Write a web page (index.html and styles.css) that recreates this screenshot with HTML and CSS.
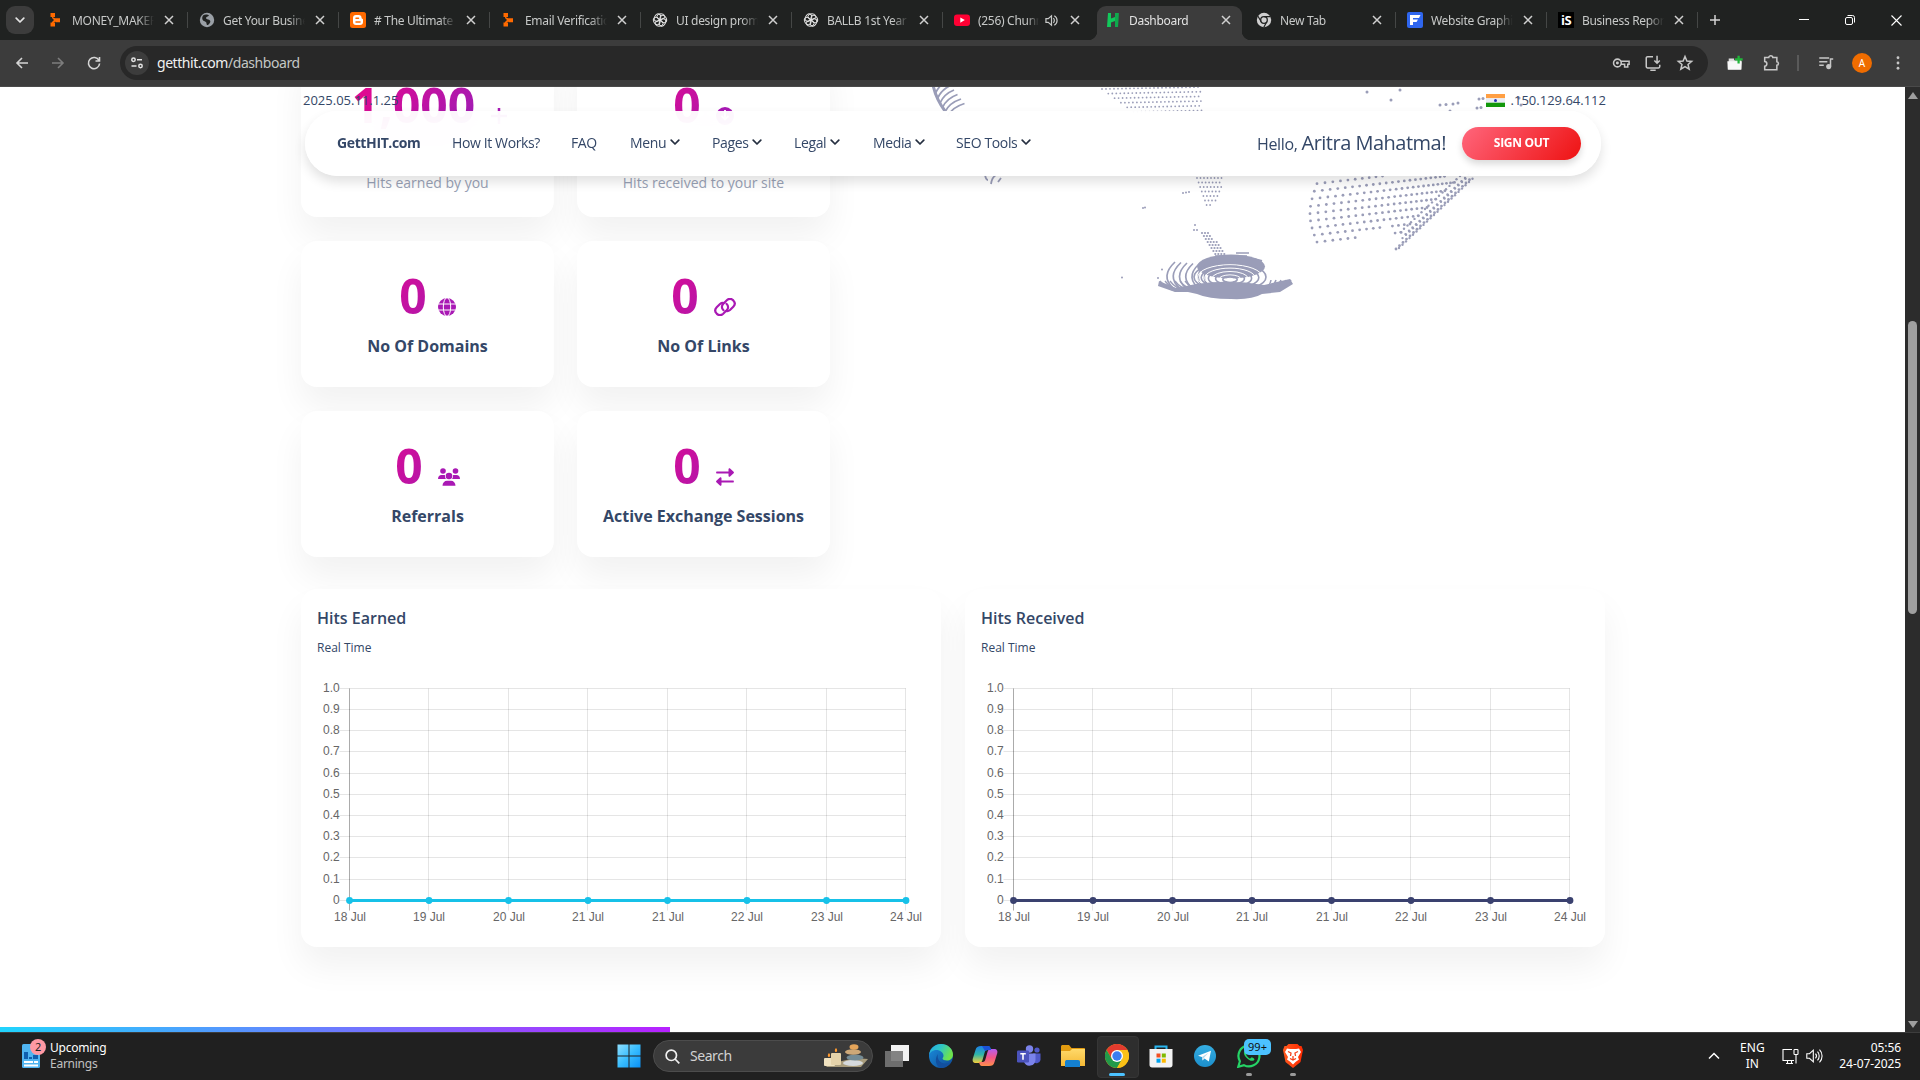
FILE: index.html
```html
<!DOCTYPE html>
<html lang="en">
<head>
<meta charset="utf-8">
<title>Dashboard</title>
<link rel="stylesheet" href="styles.css">
</head>
<body>
<svg class="defs" width="0" height="0">
  <defs>
    <linearGradient id="g-win" x1="0" y1="0" x2="1" y2="1"><stop offset="0" stop-color="#8fe0ff"/><stop offset=".5" stop-color="#38bdff"/><stop offset="1" stop-color="#0a90f5"/></linearGradient>
    <linearGradient id="g-edge" x1="0" y1="0" x2="1" y2=".4"><stop offset="0" stop-color="#23a6e8"/><stop offset=".5" stop-color="#2fc6c4"/><stop offset="1" stop-color="#6fe34b"/></linearGradient>
    <linearGradient id="g-edge2" x1="0" y1="0" x2="1" y2="1"><stop offset="0" stop-color="#1b8fe0"/><stop offset="1" stop-color="#0d4a94"/></linearGradient>
    <linearGradient id="g-cop1" x1="0" y1="0" x2="0" y2="1"><stop offset="0" stop-color="#1c7fe8"/><stop offset=".5" stop-color="#2fb6a8"/><stop offset="1" stop-color="#f5cf3a"/></linearGradient>
    <linearGradient id="g-cop2" x1="0" y1="0" x2="0" y2="1"><stop offset="0" stop-color="#b55cf0"/><stop offset=".5" stop-color="#f2558a"/><stop offset="1" stop-color="#ff8f4a"/></linearGradient>
    <linearGradient id="g-fold" x1="0" y1="0" x2="0" y2="1"><stop offset="0" stop-color="#ffd96a"/><stop offset="1" stop-color="#f5b935"/></linearGradient>
    <linearGradient id="g-tel" x1="0" y1="0" x2="0" y2="1"><stop offset="0" stop-color="#35ade1"/><stop offset="1" stop-color="#1c8fcc"/></linearGradient>
    <linearGradient id="g-brave" x1="0" y1="0" x2="1" y2="0"><stop offset="0" stop-color="#ff5a1f"/><stop offset="1" stop-color="#ff2a00"/></linearGradient>
    <symbol id="i-close" viewBox="0 0 10 10"><path d="M1 1l8 8M9 1L1 9" stroke="currentColor" stroke-width="1.5" fill="none"/></symbol>
    <symbol id="i-down" viewBox="0 0 10 7"><path d="M1.200 1.200L5 5l3.800-3.800" stroke="currentColor" stroke-width="1.700" fill="none" stroke-linecap="round" stroke-linejoin="round"/></symbol>
    <symbol id="i-puzzle" viewBox="0 0 16 16"><path fill="#ff6a00" d="M2.500 1h4.500v4h-4.500zM2.500 10.500h4.500v4h-4.500zM7.500 6.200h4.500v4h-4.500zM4 4.800l4 2v2.500l-4 2v-1.300l2-2-2-2z"/></symbol>
    <symbol id="i-gpt" viewBox="0 0 16 16"><g fill="none" stroke="#e3e3e3" stroke-width="1"><ellipse cx="8.800" cy="4.600" rx="3.900" ry="2.900" transform="rotate(0 8 8)"/><ellipse cx="8.800" cy="4.600" rx="3.900" ry="2.900" transform="rotate(60 8 8)"/><ellipse cx="8.800" cy="4.600" rx="3.900" ry="2.900" transform="rotate(120 8 8)"/><ellipse cx="8.800" cy="4.600" rx="3.900" ry="2.900" transform="rotate(180 8 8)"/><ellipse cx="8.800" cy="4.600" rx="3.900" ry="2.900" transform="rotate(240 8 8)"/><ellipse cx="8.800" cy="4.600" rx="3.900" ry="2.900" transform="rotate(300 8 8)"/></g></symbol>
  </defs>
</svg>

<header class="tabs">
  <button class="tab-search"><svg width="10" height="7"><use href="#i-down"/></svg></button>
  <div class="tab"><svg class="fav" viewBox="0 0 16 16"><use href="#i-puzzle"/></svg><span class="tt">MONEY_MAKER</span><svg class="x"><use href="#i-close"/></svg></div>
  <div class="tab"><svg class="fav" viewBox="0 0 16 16"><circle cx="8" cy="8" r="7.200" fill="#9aa0a6"/><path d="M4 3.500c2-1.500 5-1 6 0-1 1.500-3 1-3 2.500s2 1 3.500 2 1 3-1 4.500c-1 1-2 .5-2-1s-1-2-2.500-2.500S2.500 6 4 3.500z" fill="#202221"/></svg><span class="tt">Get Your Business</span><svg class="x"><use href="#i-close"/></svg></div>
  <div class="tab"><svg class="fav" viewBox="0 0 16 16"><rect width="16" height="16" rx="2.500" fill="#ff6a00"/><path d="M6 3h2.600a3 3 0 0 1 3 3c0 1 1.400.5 1.400 1.600V10a3 3 0 0 1-3 3H6a3 3 0 0 1-3-3V6a3 3 0 0 1 3-3z" fill="#fff"/><path d="M6 6.200h2.500M6 9.900h4" stroke="#ff6a00" stroke-width="1.500" stroke-linecap="round"/></svg><span class="tt"># The Ultimate</span><svg class="x"><use href="#i-close"/></svg></div>
  <div class="tab"><svg class="fav" viewBox="0 0 16 16"><use href="#i-puzzle"/></svg><span class="tt">Email Verification</span><svg class="x"><use href="#i-close"/></svg></div>
  <div class="tab"><svg class="fav"><use href="#i-gpt"/></svg><span class="tt">UI design prompt</span><svg class="x"><use href="#i-close"/></svg></div>
  <div class="tab"><svg class="fav"><use href="#i-gpt"/></svg><span class="tt">BALLB 1st Year</span><svg class="x"><use href="#i-close"/></svg></div>
  <div class="tab nosep"><svg class="fav" viewBox="0 0 16 16"><rect y="2.500" width="16" height="11.500" rx="3" fill="#ff0033"/><path d="M6.300 5.500v5.200L10.800 8.100z" fill="#fff"/></svg><span class="tt short">(256) Chunni</span><svg class="spk" viewBox="0 0 14 14"><path d="M1 5h2.500L7 2v10L3.500 9H1z" fill="none" stroke="currentColor" stroke-width="1.300"/><path d="M9 4.500a3.500 3.500 0 0 1 0 5M10 1.800a6 6 0 0 1 0 10.400" fill="none" stroke="currentColor" stroke-width="1.300"/></svg><svg class="x"><use href="#i-close"/></svg></div>
  <div class="tab active nosep"><svg class="fav" viewBox="0 0 16 16"><path d="M3 1h3v5.500l4-1.500V1h3.500l-.5 14h-3V9l-4 1.500V15H2z" fill="#12c95b"/><path d="M10 1h3.500l-.5 14h-3z" fill="#0fa94d"/></svg><span class="tt">Dashboard</span><svg class="x"><use href="#i-close"/></svg></div>
  <div class="tab"><svg class="fav" viewBox="0 0 16 16"><circle cx="8" cy="8" r="7.200" fill="#d0d0d0"/><circle cx="8" cy="8" r="3.300" fill="none" stroke="#202221" stroke-width="1.300"/><path d="M8 4.700h6.500M5.200 9.700L2 4.200M10.800 9.700l-3 5.500" stroke="#202221" stroke-width="1.200"/></svg><span class="tt">New Tab</span><svg class="x"><use href="#i-close"/></svg></div>
  <div class="tab"><svg class="fav" viewBox="0 0 16 16"><rect width="16" height="16" rx="2" fill="#2f66ee"/><path d="M3 3h10.500l-1.500 3H6v1.500h5L9.500 10H6v3H3z" fill="#fff"/></svg><span class="tt">Website Graphic</span><svg class="x"><use href="#i-close"/></svg></div>
  <div class="tab"><span class="fav is">iS</span><span class="tt">Business Report</span><svg class="x"><use href="#i-close"/></svg></div>
  <svg class="plus" viewBox="0 0 12 12"><path d="M6 1v10M1 6h10" stroke="#d4d4d4" stroke-width="1.500"/></svg>
  <div class="winbtns">
    <svg width="10" height="10" viewBox="0 0 10 10"><path d="M0 4.500h10" stroke="#fff"/></svg>
    <svg width="10" height="10" viewBox="0 0 10 10" fill="none" stroke="#fff"><rect x=".5" y="2.500" width="7" height="7" rx="1.500"/><path d="M2.500.5H7.500a2 2 0 0 1 2 2V7.500"/></svg>
    <svg width="11" height="11" viewBox="0 0 11 11"><path d="M.5.500l10 10M10.500.5l-10 10" stroke="#fff" stroke-width="1.100"/></svg>
  </div>
</header>

<div class="toolbar">
  <svg class="tb" viewBox="0 0 16 16"><path d="M14 8H3M8 3L3 8l5 5" /></svg>
  <svg class="tb dim" viewBox="0 0 16 16"><path d="M2 8h11M8 3l5 5-5 5"/></svg>
  <svg class="tb" viewBox="0 0 16 16"><path d="M13 5.500A5.600 5.600 0 1 0 13.600 8.500M13.500 2v4h-4"/></svg>
  <div class="omni">
    <span class="site"><svg width="14" height="14" viewBox="0 0 14 14" fill="none" stroke="#e3e3e3" stroke-width="1.500"><circle cx="3.500" cy="3.800" r="1.700"/><path d="M7 3.800h5M1.500 10h5"/><circle cx="10.500" cy="10" r="1.700"/></svg></span>
    <span class="url"><b>getthit.com</b>/dashboard</span>
    <svg class="ob" viewBox="0 0 20 20"><circle cx="6" cy="10" r="4.300"/><circle cx="6" cy="10" r=".8" /><path d="M10 8h9v3.500h-1.500v3h-3.500v-3h-4"/></svg>
    <svg class="ob" viewBox="0 0 20 20"><path d="M10 3H4a1.500 1.500 0 0 0-1.500 1.500v9.500A1.500 1.500 0 0 0 4 15.500h12a1.500 1.500 0 0 0 1.500-1.500v-2M14.500 2v8M11.500 7.200l3 3 3-3M7 18h6"/></svg>
    <svg class="ob" viewBox="0 0 20 20"><path d="M10 2.800l2.100 4.900 5.300.5-4 3.500 1.200 5.200L10 14.100l-4.600 2.800 1.200-5.200-4-3.500 5.300-.5z"/></svg>
  </div>
  <svg class="ext1" viewBox="0 0 20 20"><path d="M3 5h6v2h8v10H3z" fill="#dedede"/><path d="M1.500 8h16l-.5 9.500H2z" fill="#f8f8f8"/><path d="M14 2v8.500M10 6h8.500" stroke="#21b53a" stroke-width="2.500"/></svg>
  <svg class="ob ext2" viewBox="0 0 20 20"><path d="M3 4H7.500c0-2.700 4.500-2.700 4.500 0h4.500v4.500c2.300 0 2.300 4 0 4V17.500H3V13.500c3.200 0 3.200-5.200 0-5.200z"/></svg>
  <i class="vbar"></i>
  <svg class="ob" viewBox="0 0 20 20"><path d="M2.500 4.500h11M2.500 8.500h9M2.500 12.500h5M15 14V5.500h3"/><circle cx="13" cy="14" r="2" fill="#c7c7c7"/></svg>
  <span class="avatar">A</span>
  <svg class="dots" viewBox="0 0 4 16"><circle cx="2" cy="2" r="1.600"/><circle cx="2" cy="8" r="1.600"/><circle cx="2" cy="14" r="1.600"/></svg>
</div>

<main class="view">
  <div class="page">
    <svg class="globe" id="globe" width="1920" height="240"></svg>
    <div class="content">
      <div class="stats">
        <section class="card tall">
          <div class="num first">1,000<svg class="ic g15" width="18" height="18" viewBox="0 0 18 18"><path d="M9 1v16M1 9h16" stroke="#a919b4" stroke-width="2.500"/></svg></div>
          <p>Hits earned by you</p>
        </section>
        <section class="card tall">
          <div class="num">0<svg class="ic g15" width="18" height="18" viewBox="0 0 18 18"><circle cx="9" cy="9" r="9" fill="#a919b4"/><path d="M9 3v9M5.500 9L9 12.500 12.500 9" stroke="#fff" stroke-width="1.800" fill="none"/></svg></div>
          <p>Hits received to your site</p>
        </section>
        <section class="card">
          <div class="num">0<svg class="ic g11" width="18" height="18" viewBox="0 0 18 18"><circle cx="9" cy="9" r="9" fill="#a919b4"/><g fill="none" stroke="#fff" stroke-width="1"><ellipse cx="9" cy="9" rx="3.700" ry="9.300"/><path d="M0 6h18M0 12h18"/></g></svg></div>
          <h5>No Of Domains</h5>
        </section>
        <section class="card">
          <div class="num">0<svg class="ic g15" width="22" height="18" viewBox="0 0 22 18"><g fill="none" stroke="#a919b4" stroke-width="2.200" stroke-linecap="round"><path d="M9.500 12.200c-2.200-2-2-4.700-.2-6.500l3.500-3.400c2-1.800 4.700-1.700 6.500.1 1.800 1.900 1.800 4.500 0 6.300l-3.300 3.300c-1.200 1-2.600 1.300-3.700 1"/><path d="M12.500 5.800c2.200 2 2 4.700.2 6.500l-3.500 3.400c-2 1.800-4.700 1.700-6.500-.1-1.800-1.900-1.800-4.500 0-6.300L6 6c1.200-1 2.600-1.300 3.700-1"/></g></svg></div>
          <h5>No Of Links</h5>
        </section>
        <section class="card">
          <div class="num">0<svg class="ic g15" width="22" height="18" viewBox="0 0 22 18" fill="#a919b4"><circle cx="5" cy="3" r="2.800"/><circle cx="17.500" cy="3" r="2.800"/><circle cx="11" cy="8" r="3.300"/><path d="M4.500 17.800c0-3 2-5 4.500-5h4c2.500 0 4.500 2 4.500 5zM0 11c0-2.500 1.500-4 3.500-4h2.500c.4 0 .8.100 1 .2-.2 1.500.2 2.800 1 3.800zM22 11c0-2.500-1.500-4-3.500-4H16c-.4 0-.8.100-1 .2.200 1.500-.2 2.800-1 3.800z"/></svg></div>
          <h5>Referrals</h5>
        </section>
        <section class="card">
          <div class="num">0<svg class="ic g15" width="18" height="18" viewBox="0 0 18 18" fill="#a919b4"><path d="M1 3.500h11.500V1.200c0-1 1-1.300 1.600-.7l3.500 3.200c.5.500.5 1 0 1.500l-3.500 3.200c-.6.600-1.600.2-1.600-.7V5.500H1c-1.200 0-1.200-2 0-2zM17 12.500H5.500v-2.300c0-1-1-1.300-1.600-.7L.4 12.700c-.5.500-.5 1 0 1.500l3.500 3.200c.6.600 1.600.2 1.600-.7v-2.200H17c1.200 0 1.200-2 0-2z"/></svg></div>
          <h5>Active Exchange Sessions</h5>
        </section>
      </div>
      <div class="charts">
        <section class="card chart"><h6>Hits Earned</h6><small>Real Time</small><svg class="plot" data-color="#17c1e8" width="640" height="260"></svg></section>
        <section class="card chart"><h6>Hits Received</h6><small>Real Time</small><svg class="plot" data-color="#3a416f" width="640" height="260"></svg></section>
      </div>
    </div>
    <div class="topline"><span>2025.05.11.1.25</span><span class="ip"><svg width="19" height="13" viewBox="0 0 19 13"><rect width="19" height="4.300" fill="#ff9f43"/><rect y="4.300" width="19" height="4.400" fill="#e9edf5"/><rect y="8.700" width="19" height="4.300" fill="#13980c"/><circle cx="9.500" cy="6.500" r="1.500" fill="#2a35b5"/></svg>.150.129.64.112</span></div>
    <nav class="nav">
      <b class="brand">GettHIT.com</b>
      <a class="n1">How It Works?</a>
      <a class="n2">FAQ</a>
      <a class="n3">Menu<svg><use href="#i-down"/></svg></a>
      <a class="n4">Pages<svg><use href="#i-down"/></svg></a>
      <a class="n5">Legal<svg><use href="#i-down"/></svg></a>
      <a class="n6">Media<svg><use href="#i-down"/></svg></a>
      <a class="n7">SEO Tools<svg><use href="#i-down"/></svg></a>
      <span class="hello">Hello, <em>Aritra Mahatma!</em></span>
      <button class="out">SIGN OUT</button>
    </nav>
    <div class="progress"></div>
  </div>
  <div class="scroll"><i class="up"></i><i class="thumb"></i><i class="dn"></i></div>
</main>

<footer class="taskbar">
  <div class="widget">
    <svg width="20" height="26" viewBox="0 0 20 26"><rect x="0" y="1" width="18" height="24" rx="1.500" fill="#4fb4f0"/><path d="M2 9h4v7H2zM7 14h3v2H7zM11 12h5v4h-5z" fill="#0f5fae"/><path d="M2 18h9v2H2zM12 18h4v2h-4zM2 21.500h14v2H2z" fill="#fff"/></svg>
    <span class="badge">2</span>
    <div class="wtxt">Upcoming<br><span>Earnings</span></div>
  </div>
  <div class="center">
    <span class="app"><svg width="24" height="24" viewBox="0 0 24 24" fill="url(#g-win)"><path d="M.5.500h11v11H.5zM12.500.5h11v11h-11zM.5 12.500h11v11H.5zM12.500 12.500h11v11h-11z"/></svg></span>
    <div class="search"><svg width="15" height="15" viewBox="0 0 15 15" fill="none" stroke="#f0f0f0" stroke-width="1.700"><circle cx="6.300" cy="6.300" r="5.200"/><path d="M10 10l4.300 4.300"/></svg><span>Search</span>
      <svg class="art" width="46" height="26" viewBox="0 0 46 26"><path d="M2 22l30-7 13 1-7 8H4z" fill="#a99d7d"/><rect x="1" y="15" width="11" height="8" rx="1" fill="#f0e2c0"/><rect x="8" y="10" width="10" height="12" rx="1" fill="#e5d3aa"/><path d="M6 10c2 2 1 4 0 4s-2-2 0-4zM13 5c2 2 1 4 0 4s-2-2 0-4z" fill="#ff9a2e"/><ellipse cx="30" cy="20" rx="10" ry="3" fill="#d5d9dc"/><ellipse cx="32" cy="14.500" rx="8.500" ry="3" fill="#748b95"/><ellipse cx="30" cy="9" rx="8" ry="2.800" fill="#cda878"/><ellipse cx="31" cy="4" rx="4.500" ry="2.700" fill="#e5a55a"/></svg></div>
    <span class="app"><svg width="24" height="22" viewBox="0 0 24 22"><rect x="6" width="18" height="16" fill="#f2f2f2"/><rect y="6" width="18" height="16" fill="#777" opacity=".9"/></svg></span>
    <span class="app"><svg width="24" height="24" viewBox="0 0 24 24"><circle cx="12" cy="12" r="12" fill="url(#g-edge2)"/><path d="M0 11C1 4 6 0 12 0c7 0 12 5 12 10.500 0 4-3 6-6 6-2.500 0-4.500-1-4.500-2 0-.8 1-1 1-3C14.500 8.500 11 6 7.500 6 3.500 6 1 8.500 0 11z" fill="url(#g-edge)"/><path d="M9 10c-1.500 5 2.500 9.500 7 9.500 3 0 4.500-.8 6-2 .5.500-3.500 6.500-10 6.500-5-1-7-9-3-14z" fill="#124f9e"/></svg></span>
    <span class="app"><svg width="26" height="24" viewBox="0 0 26 24"><path d="M9 2h7c2 0 2.500 2 3 4h-3.500c-2 0-2.500 1-3 3l-2 7c-.6 2-1.500 3-3.500 3H4c-3 0-4-2-3-5L3.500 6C4.300 3 6 2 9 2z" fill="url(#g-cop1)"/><path d="M17 22h-7c-2 0-2.500-2-3-4h3.500c2 0 2.500-1 3-3l2-7c.6-2 1.500-3 3.500-3h3c3 0 4 2 3 5l-2.500 8c-.8 3-2.500 4-5.500 4z" fill="url(#g-cop2)"/><path d="M10 2h6c2 0 2.500 2 3 4h-3.500L13 7z" fill="#1a52d8"/></svg></span>
    <span class="app"><svg width="24" height="22" viewBox="0 0 24 22"><circle cx="12.500" cy="4" r="3.700" fill="#7b83eb"/><circle cx="20" cy="5" r="2.600" fill="#5059c9"/><path d="M16 8.500h7.500V15a4 4 0 0 1-7.500 1z" fill="#5059c9"/><path d="M7 8.500h11.500V15a6 6 0 0 1-11.500 2z" fill="#7b83eb"/><rect y="5.500" width="12" height="12" rx="1.200" fill="#4b53bc"/><path d="M3.300 8.800h5.500M6 8.800v6" stroke="#fff" stroke-width="1.600"/></svg></span>
    <span class="app"><svg width="24" height="22" viewBox="0 0 24 22"><path d="M0 1.500C0 .7.700 0 1.500 0H8l2.500 3H23c.6 0 1 .4 1 1v4H0z" fill="#e29b10"/><path d="M0 6h9l2-2h13v17H0z" fill="url(#g-fold)"/><path d="M4 22v-5c0-1.500 1-2 2-2h11c1.500 0 2 .8 2 2v5z" fill="#1480d0"/></svg></span>
    <span class="app on"><svg width="24" height="24" viewBox="0 0 24 24"><circle cx="12" cy="12" r="12" fill="#fbc116"/><path d="M1.600 6A12 12 0 0 1 22.400 6H12L6.800 15z" fill="#e33b2e"/><path d="M1.600 6A12 12 0 0 0 12 24l5.200-9H6.800z" fill="#229a4a"/><path d="M12 24L17.200 15 12 6h10.400A12 12 0 0 1 12 24z" fill="#fbc116"/><circle cx="12" cy="12" r="6" fill="#fff"/><circle cx="12" cy="12" r="4.700" fill="#3b7df0"/></svg><i class="ind blue"></i></span>
    <span class="app"><svg width="24" height="24" viewBox="0 0 24 24"><path d="M6.500 6V2.500h11V6" fill="none" stroke="#29b6f0" stroke-width="2"/><path d="M.5 5h23v16c0 1.500-1 2.500-2.500 2.500H3C1.500 23.500.5 22.500.5 21z" fill="#f3f3f3"/><path d="M7.500 9.500h4v4h-4z" fill="#f25022"/><path d="M12.800 9.500h4v4h-4z" fill="#7fba00"/><path d="M7.500 14.700h4v4h-4z" fill="#00a4ef"/><path d="M12.800 14.700h4v4h-4z" fill="#ffb900"/></svg></span>
    <span class="app"><svg width="22" height="22" viewBox="0 0 22 22"><circle cx="11" cy="11" r="11" fill="url(#g-tel)"/><path d="M4 10.800L17 5.700l-2.200 10.800-4.300-3-2 2-.6-3.400z" fill="#fff"/><path d="M8 12l6.500-4.200-4.500 5-1.500 2.500z" fill="#b9daee"/></svg></span>
    <span class="app"><svg width="24" height="24" viewBox="0 0 24 24"><path d="M1.300 22.800l1.600-5.600a10.500 10.500 0 1 1 4 3.900z" fill="#202221" stroke="#25d366" stroke-width="2.200"/><path d="M8 6.500c-2 1.500-1 4.500 1.500 7.200s6 4.300 7.700 2.200c.8-1-.3-1.800-2-2.500-1.200-.3-1.300 1.600-2.600 1-1.500-.8-2.800-2.200-3.300-3.400-.3-.9 1-1.100.8-2.100C9.700 7.200 9.300 6 8 6.500z" fill="#25d366"/></svg><span class="cnt">99+</span><i class="ind"></i></span>
    <span class="app"><svg width="20" height="24" viewBox="0 0 20 24"><path d="M5.500 0h9l2 2h2l1.500 4-2.500 12L10 24l-7.500-6L0 6l1.500-4h2z" fill="url(#g-brave)"/><path d="M4 4.500l3 .5h6l3-.5 2 3.500-3 5 1 2.500-3.500 2.500L10 20.500 7.500 18 4 15.500 5 13 2 8z" fill="#fff"/><path d="M5 7.500l3 1.500-.5 3M15 7.500L12 9l.5 3M7 14.500l3 1.500 3-1.500M10 12v4" stroke="#f4401a" stroke-width="1.300" fill="none"/></svg><i class="ind"></i></span>
  </div>
  <div class="tray">
    <svg class="chev" width="12" height="8" viewBox="0 0 12 8"><path d="M1 6.500l5-5 5 5" stroke="#fff" stroke-width="1.500" fill="none"/></svg>
    <div class="lang">ENG<br>IN</div>
    <svg class="net" width="17" height="17" viewBox="0 0 17 17" fill="none" stroke="#fff" stroke-width="1.100"><path d="M10 1.500H1v11h11M4 15.500h7M5.500 12.500v3M9.500 12.500v3M14 6.500V15.500"/><rect x="12" y="1.500" width="4" height="5" rx=".8"/></svg>
    <svg class="vol" width="17" height="16" viewBox="0 0 17 16" fill="none" stroke="#fff" stroke-width="1.100"><path d="M.8 5.700h2.700L7.300 2.200v11.600L3.500 10.300H.8z"/><path d="M9.500 5.700a3.500 3.500 0 0 1 0 4.600M11.500 3.700a6.300 6.300 0 0 1 0 8.600M13.500 1.700a9 9 0 0 1 0 12.600"/></svg>
    <div class="clock">05:56<br>24-07-2025</div>
  </div>
</footer>
<script src="app.js"></script>
</body>
</html>
```
FILE: styles.css
```css
* { box-sizing: border-box; }
body { margin: 0; width: 1920px; height: 1080px; overflow: hidden; display: flex; flex-direction: column; font-family: "Open Sans", sans-serif; background: #fff; }
.defs { position: absolute; }
svg { flex: none; display: block; }

/* browser tab strip */
.tabs { height: 40px; flex: none; background: #202221; display: flex; align-items: flex-start; padding-left: 6px; color: #c7c9c8; font: 12px "Noto Sans", sans-serif; }
.tab-search { width: 28px; height: 28px; border: 0; border-radius: 9px; background: #3c3c3c; color: #e3e3e3; margin: 6px 3px 0 0; padding: 0; display: flex; align-items: center; justify-content: center; }
.tab { width: 151px; height: 34px; margin-top: 6px; padding: 0 14px 6px 11px; display: flex; align-items: center; position: relative; }
.tab::after { content: ""; position: absolute; right: 0; top: 6px; width: 1.500px; height: 16px; background: #454746; }
.tab.nosep::after { display: none; }
.fav { width: 16px; height: 16px; margin-right: 8px; flex: none; }
.fav.is { background: #000; color: #fff; font: bold 13px/16px "Open Sans", sans-serif; text-align: center; letter-spacing: -.5px; }
.tt { width: 82px; flex: none; overflow: hidden; white-space: nowrap; letter-spacing: -.3px; line-height: 18px; padding-top: 1px; -webkit-mask-image: linear-gradient(90deg, #000 80%, transparent); mask-image: linear-gradient(90deg, #000 80%, transparent); }
.tt.short { width: 61px; margin-right: 6px; }
.spk { width: 13px; height: 13px; margin-right: 2px; }
.x { width: 10px; height: 10px; margin-left: auto; color: #d0d0d0; }
.tab.active { width: 145px; margin-left: 3px; margin-right: 3px; padding: 0 11px 6px 8px; background: #3c3c3c; border-radius: 9px 9px 0 0; color: #e3e3e3; }
.tab.active::before { content: ""; position: absolute; left: -9px; bottom: 0; width: 9px; height: 9px; background: radial-gradient(circle at 0 0, transparent 9px, #3c3c3c 9.500px); }
.tab.active::after { display: block; left: 145px; right: auto; top: auto; bottom: 0; width: 9px; height: 9px; background: radial-gradient(circle at 100% 0, transparent 9px, #3c3c3c 9.500px); }
.plus { width: 12px; height: 12px; margin: 14px 0 0 11px; }
.winbtns { margin-left: auto; padding: 15px 18px 0 0; display: flex; gap: 36px; }

/* browser toolbar */
.toolbar { height: 47px; flex: none; background: #3c3c3c; border-bottom: 1px solid #4a4a4a; display: flex; align-items: center; padding: 0 20px 0 14px; }
.tb { width: 16px; height: 16px; margin-right: 20px; fill: none; stroke: #d5d5d5; stroke-width: 1.600; }
.tb.dim { stroke: #7d7d7d; }
.omni { width: 1590px; height: 34px; margin-left: -2px; border-radius: 17px; background: #282828; display: flex; align-items: center; padding: 0 14px 0 5px; }
.site { width: 24px; height: 24px; border-radius: 50%; background: #3c3c3c; display: flex; align-items: center; justify-content: center; margin-right: 8px; }
.url { font: 14px/18px "Noto Sans", sans-serif; letter-spacing: -.45px; color: #c4c7c5; margin: -1px auto 0 0; }
.url b { font-weight: 400; color: #f0f0f0; }
.ob { width: 18px; height: 18px; fill: none; stroke: #c7c7c7; stroke-width: 1.700; }
.omni .ob { margin-left: 14px; }
.ext1 { width: 18px; height: 18px; margin: 0 18px 0 18px; }
.vbar { width: 2px; height: 16px; background: #5a5a5a; margin: 0 18px 0 17px; }
.avatar { width: 20px; height: 20px; border-radius: 50%; background: #ef6c00; color: #fff; font: 10px/20px "Noto Sans", sans-serif; text-align: center; margin: 0 24px 0 17px; }
.dots { width: 4px; height: 14px; fill: #c7c7c7; }

/* web page */
.view { height: 945px; flex: none; display: flex; overflow: hidden; background: #fff; }
.page { width: 1905px; height: 945px; position: relative; overflow: hidden; background: #fff; }
.globe { position: absolute; left: 0; top: 0; }
.content { width: 1304px; margin: -37px 0 0 301px; color: #344767; }
.stats { display: grid; grid-template-columns: 253px 253px; grid-template-rows: 167px 146px 146px; gap: 24px 23px; }
.card { background: #fff; border-radius: 16px; box-shadow: 0 20px 34px rgba(0, 0, 0, .055); text-align: center; position: relative; }
.stats .card { padding-top: 22px; }
.num { display: flex; justify-content: center; align-items: flex-start; font-weight: 700; font-size: 48px; line-height: 65px; margin: 0 16px; color: transparent; background: linear-gradient(310deg, #7928ca, #ff0080); -webkit-background-clip: text; background-clip: text; }
.num.first { padding-left: 5px; }
.ic { margin-top: 35px; }
.g11 { margin-left: 11px; }
.g15 { margin-left: 15px; }
.card h5 { margin: 7px 0 0; font-size: 16px; line-height: 22px; font-weight: 700; }
.card p { margin: 35px 0 0; font-size: 14px; line-height: 22px; color: #98a1b5; }
.charts { display: grid; grid-template-columns: 640px 640px; gap: 24px; margin-top: 32px; }
.chart { height: 358px; text-align: left; }
.chart h6 { margin: 0; padding: 18px 16px 0; font-size: 16px; line-height: 22px; font-weight: 600; }
.chart small { display: block; padding: 10px 16px 0; font-size: 12px; line-height: 18px; }
.plot { margin-top: 17px; }
.plot text { font: 12px "Liberation Sans", sans-serif; fill: #666; }
.topline { position: absolute; left: 303px; top: 4px; width: 1303px; display: flex; justify-content: space-between; color: #344767; font-size: 13px; line-height: 18px; }
.ip { display: flex; align-items: center; gap: 6px; letter-spacing: 0; }
.nav { position: absolute; left: 305px; top: 24px; width: 1296px; height: 65px; border-radius: 33px; background: rgba(255, 255, 255, .92); -webkit-backdrop-filter: blur(30px); backdrop-filter: blur(30px); box-shadow: 0 6px 12px rgba(0, 0, 0, .12); display: flex; align-items: center; padding: 0 20px 2px 32px; color: #344767; font-size: 14px; letter-spacing: -.38px; white-space: nowrap; }
.nav > * { flex: none; }
.nav a { display: flex; align-items: center; gap: 4px; }
.nav a svg { width: 10px; height: 7px; color: #252f40; }
.brand { width: 115px; }
.n1 { width: 119px; }
.n2 { width: 59px; }
.n3, .n4 { width: 82px; }
.n5 { width: 79px; }
.n6 { width: 83px; }
.hello { margin-left: auto; margin-right: 16px; font-size: 16px; letter-spacing: -.32px; }
.hello em { font-style: normal; font-size: 20px; letter-spacing: -.5px; }
.out { width: 119px; height: 33px; margin-top: 1px; border: 0; border-radius: 17px; background: linear-gradient(310deg, #ee1212, #ff667c); color: #fff; font: 700 12px "Open Sans", sans-serif; letter-spacing: -.3px; padding: 0 6px 2px; box-shadow: 0 4px 7px rgba(0, 0, 0, .15); }
.progress { position: absolute; left: 0; bottom: 0; width: 670px; height: 5px; background: linear-gradient(90deg, #21d4fd, #b721ff); }
.scroll { width: 15px; background: #2c2c2c; display: flex; flex-direction: column; align-items: center; position: relative; }
.scroll .up { border: 5px solid transparent; border-top: 0; border-bottom: 7px solid #9f9f9f; margin-top: 5px; }
.scroll .thumb { width: 9px; height: 293px; border-radius: 5px; background: #9f9f9f; margin-top: 222px; }
.scroll .dn { border: 5px solid transparent; border-bottom: 0; border-top: 7px solid #9f9f9f; margin: auto 0 4px; }

/* desktop taskbar */
.taskbar { height: 48px; flex: none; background: #202020; border-top: 1px solid #3d3d3d; display: flex; align-items: center; color: #fff; font: 12px/16px "Noto Sans", sans-serif; padding-bottom: 1px; }
.widget { width: 606px; padding-left: 22px; display: flex; align-items: center; position: relative; letter-spacing: -.25px; }
.wtxt { margin-left: 8px; }
.wtxt span { color: #c0c0c0; }
.badge { position: absolute; left: 30px; top: -1px; width: 16px; height: 16px; border-radius: 50%; background: #ff99a4; color: #222; font-size: 11px; text-align: center; }
.center { display: flex; align-items: center; height: 47px; padding-left: 1px; }
.app { width: 44px; height: 40px; display: flex; align-items: center; justify-content: center; position: relative; }
.app.on::before { content: ""; position: absolute; left: 2px; top: 0; width: 40px; height: 40px; border-radius: 4px; background: #2e2e2e; border: 1px solid #363636; }
.app svg { position: relative; }
.ind { position: absolute; bottom: 0; width: 6px; height: 3px; border-radius: 2px; background: #9a9a9a; }
.ind.blue { width: 16px; background: #4cc2ff; }
.cnt { position: absolute; left: 17px; top: 3px; width: 27px; height: 16px; border-radius: 5px; background: #4cc2ff; color: #111; font-size: 11px; text-align: center; }
.search { width: 220px; height: 32px; margin: 0 2px 0 2px; border-radius: 16px; background: #3b3b3b; border: 1px solid #4c4c4c; display: flex; align-items: center; padding: 0 3px 0 11px; font-size: 14px; color: #d2d2d2; }
.search span { margin-left: 10px; letter-spacing: -.45px; }
.art { margin-left: auto; }
.tray { margin-left: auto; display: flex; align-items: center; padding-right: 19px; }
.lang { width: 40px; margin-left: 12px; text-align: center; }
.net { margin-left: 10px; }
.vol { margin: 0 16px 0 7px; }
.clock { text-align: right; letter-spacing: -.1px; }
```
FILE: app.js
```js
const NS = 'http://www.w3.org/2000/svg';
function add(svg, tag, attrs, text) {
  const e = document.createElementNS(NS, tag);
  for (const k in attrs) e.setAttribute(k, attrs[k]);
  if (text) e.textContent = text;
  svg.appendChild(e);
}

// Line charts
const days = ['18 Jul', '19 Jul', '20 Jul', '21 Jul', '21 Jul', '22 Jul', '23 Jul', '24 Jul'];
document.querySelectorAll('.plot').forEach(svg => {
  const color = svg.dataset.color, x0 = 48.5, y0 = 14.5, dx = 79.5, h = 212;
  for (let i = 0; i <= 10; i++) {
    const y = Math.floor(y0 + i * h / 10 - .2) + .5;
    add(svg, 'path', { d: `M${x0 - 10} ${y}H605`, stroke: '#000', 'stroke-opacity': .1 });
    add(svg, 'text', { x: 38.7, y: y + 3.6, 'text-anchor': 'end' }, i === 10 ? '0' : (1 - i / 10).toFixed(1));
  }
  days.forEach((d, i) => {
    const x = Math.floor(x0 + i * dx - .4) + .5;
    add(svg, 'path', { d: `M${x} ${y0}V${y0 + h + 10}`, stroke: '#000', 'stroke-opacity': i ? .1 : .33 });
    add(svg, 'text', { x: x + .5, y: y0 + h + 20.5, 'text-anchor': 'middle' }, d);
  });
  add(svg, 'path', { d: `M${x0} ${y0 + h}H605`, stroke: color, 'stroke-width': 3 });
  days.forEach((d, i) => add(svg, 'circle', { cx: x0 + i * dx, cy: y0 + h, r: 3.4, fill: color }));
});

// Dotted globe
const g = document.getElementById('globe'), C = '#9a9db8';
const dot = (x, y, r = 1) => add(g, 'circle', { cx: x, cy: y - 87, r, fill: C });
const line = (d, w = 1.5) => add(g, 'path', { d, stroke: C, 'stroke-width': w, fill: 'none', transform: 'translate(0 -87)' });

// north-west coast
for (let i = 0; i < 6; i++) line(`M${935 + i * 2.5} ${94 + i * 4.5}q4 -9 ${12 + i} -13`, 1.8);
line('M933 85q3 14 12 26', 3);
line('M985 175q1 5 3 5M991 184q1 -7 5 -9M998 182l3 -4', 1.8);
// central landmass
for (let r = 0; r < 6; r++) for (let x = 1102 + r * 6.3; x < 1202; x += 4) dot(x, 89 + r * 4.7 - (x - 1102) * .02, .9);
for (let r = 0; r < 7; r++) for (let x = 1197 + r * 1.6; x < 1222 - Math.max(0, r - 3) * 3; x += 3.5) dot(x, 178 + r * 4.5, .9);
[[1183, 193], [1186, 192.5], [1189, 192], [1143, 208], [1145, 207.5], [1122, 277.5], [1162, 269.5], [1158, 278], [1195, 225], [1194, 230], [1197, 230]].forEach(p => dot(p[0], p[1], 1));
for (let r = 0; r < 8; r++) for (let x = 1202 + r * 1.9; x < 1210 + r * 2.3; x += 3) dot(x, 233 + r * 3, 1.1);
// southern rings
line('M1215 256h32M1216 258.500h30M1236 253h13', 1.5);
line('M1254 259l8 2', 2);
add(g, 'ellipse', { cx: 1231, cy: 179.5, rx: 34, ry: 12, fill: C });
for (let i = 0; i < 7; i++) line(`M${1175 + i * 6} ${262 + i * .5}q-15 14 ${-2 + i} 26`, 1.7);
for (let i = 0; i < 10; i++) add(g, 'ellipse', { cx: 1230, cy: 190 + i * .3, rx: 36 - i * 3.6, ry: 14 - i * 1.4, fill: 'none', stroke: i % 2 ? '#fff' : C, 'stroke-width': i % 2 ? 1 : 1.6 });
add(g, 'path', { d: 'M1159 281L1176 288L1196 284Q1230 279 1264 285L1290 279L1293 284L1280 292L1262 294Q1252 300 1231 299Q1208 299 1197 294L1188 292L1175 292L1158 286z', fill: C, transform: 'translate(0 -87)' });
for (let i = 0; i < 5; i++) line(`M${1262 + i * 4} 290q8 -3 ${9 + i} -10`, 1.5);
for (let i = 0; i < 6; i++) line(`M${1160 + i * 5} 281q5 7 16 10`, 1.3);
// eastern landmass
for (let r = 0; r < 10; r++) {
  let x = 1317 - Math.sin(r / 8 * Math.PI) * 7, step = 8;
  const right = 1472 - r * 8.3;
  while (x < right) {
    const y = 184 + r * 7.3 - (x - 1314) * .115;
    const gap = r > 6 && x > 1385 - (r - 7) * 27 && x < 1390 + (r - 7) * 4;
    if (y > 176 && !gap && y < 246) dot(x, y, 1.4);
    x += step; step = Math.max(4, step - .18);
  }
}
for (let i = 0; i < 22; i++) {
  const x = 1396 + i * 3.5, y = 249 - i * 3.3;
  dot(x, y, 1.4); dot(x + 3, y - 1, 1.2);
  if (i > 2) { dot(x - 4, y - 1, 1.2); dot(x - 1, y - 5, 1.2); dot(x - 6, y - 7, 1.2); }
}
[[1367, 92], [1391, 100], [1400, 90], [1440, 105], [1446, 104.5], [1453, 104], [1458, 103], [1450, 111], [1477, 108], [1481, 107.5], [1479, 99], [1483, 98.5], [1519, 98], [1521, 105]].forEach(p => dot(p[0], p[1], 1.5));
```
